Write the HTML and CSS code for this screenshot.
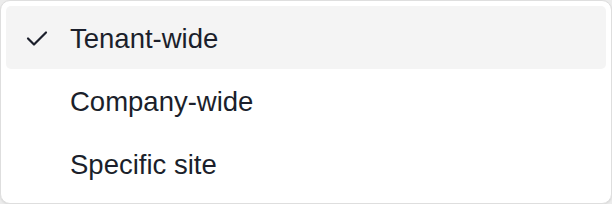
FILE: index.html
```html
<!DOCTYPE html>
<html>
<head>
<meta charset="utf-8">
<link rel="stylesheet" href="styles.css">
</head>
<body>
<div class="menu">
  <div class="item selected">
    <span class="check"><svg width="22" height="22" viewBox="0 0 22 22"><path d="M2 11.5 L8 17.5 L20 5.5" fill="none" stroke="#1b1f2b" stroke-width="2.2" stroke-linecap="round" stroke-linejoin="round"/></svg></span>
    <span class="label">Tenant-wide</span>
  </div>
  <div class="item">
    <span class="check"></span>
    <span class="label">Company-wide</span>
  </div>
  <div class="item">
    <span class="check"></span>
    <span class="label">Specific site</span>
  </div>
</div>
</body>
</html>
```
FILE: styles.css
```css
html, body {
  margin: 0;
  padding: 0;
  background: #ececec;
}
.menu {
  box-sizing: border-box;
  width: 612px;
  height: 204px;
  padding: 5px;
  background: #fff;
  border: 1px solid #dedede;
  border-radius: 10px;
  box-shadow: 0 1px 2px rgba(0,0,0,0.08);
  font-family: "Liberation Sans", Arial, sans-serif;
  display: flex;
  flex-direction: column;
}
.item {
  height: 63px;
  display: flex;
  align-items: center;
  border-radius: 5px;
  color: #1b1f2b;
  font-size: 27.5px;
}
.item.selected {
  background: #f4f4f4;
}
.check {
  width: 64px;
  display: flex;
  justify-content: flex-start;
  padding-left: 20px;
  box-sizing: border-box;
}
.check svg { display: block; }
.label { line-height: 1; padding-top: 3px; }
```
